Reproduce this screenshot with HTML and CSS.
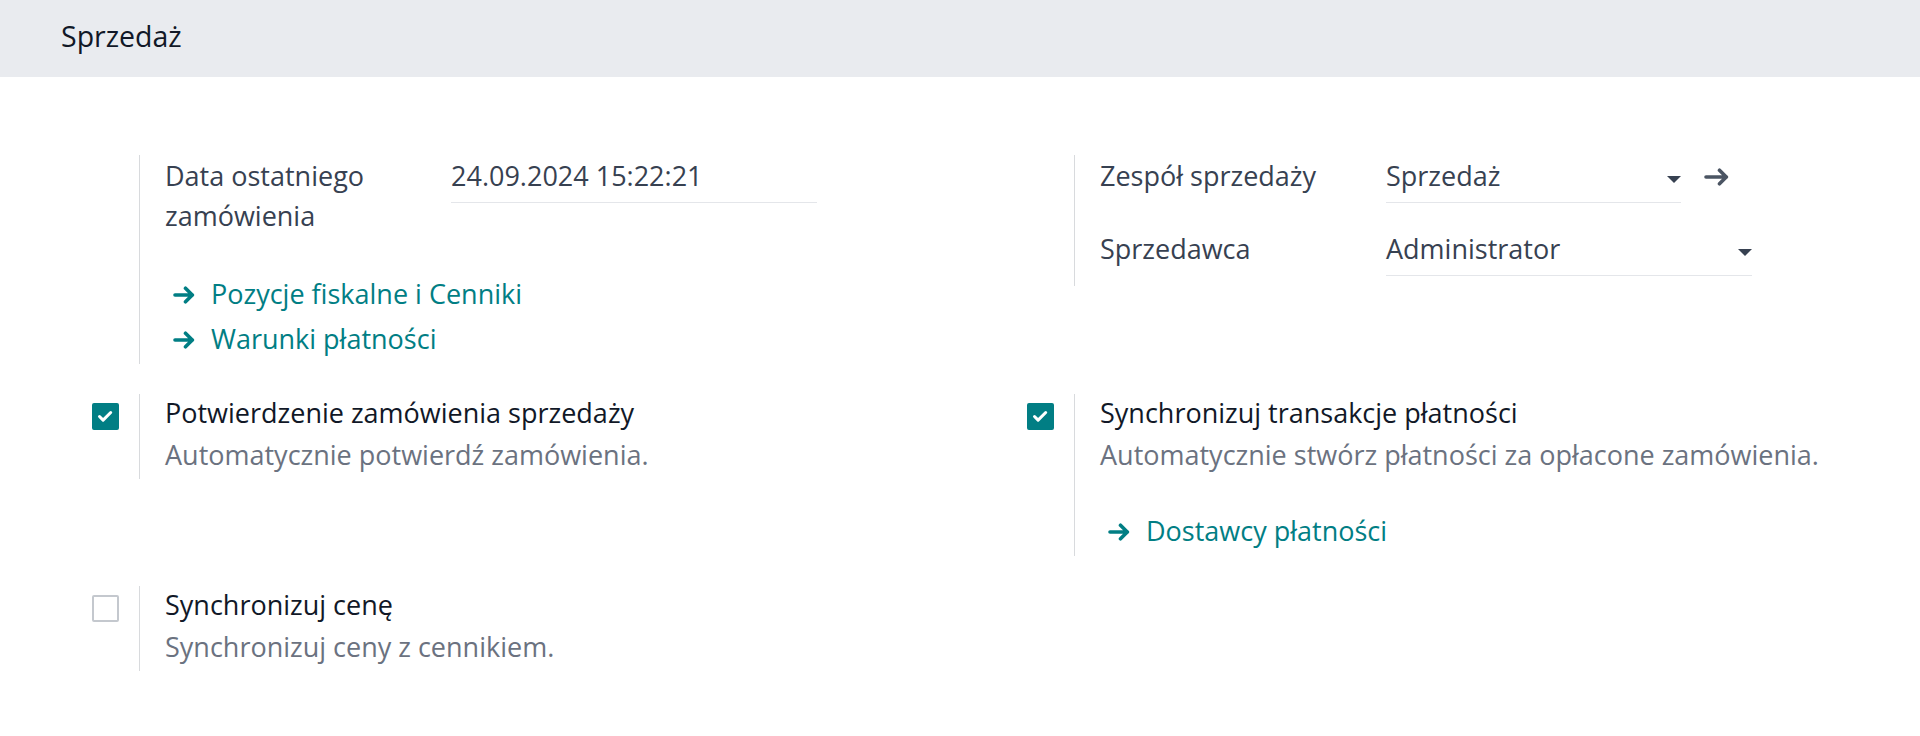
FILE: index.html
```html
<!DOCTYPE html>
<html lang="pl">
<head>
  <meta charset="UTF-8">
  <meta name="viewport" content="width=device-width, initial-scale=1.0">
  <title>Ustawienia - Sprzedaż</title>
  <link rel="stylesheet" href="styles.css">
</head>
<body>

  <h2 class="section-head">Sprzedaż</h2>

  <div class="settings">

    <!-- data ostatniego zamowienia -->
    <div class="setting">
      <div class="setting-left"></div>
      <div class="setting-right">
        <div class="field-row">
          <label class="field-label">Data ostatniego zamówienia</label>
          <div class="field-value"><span class="input">24.09.2024 15:22:21</span></div>
        </div>
        <div class="links after-fields">
          <a class="link-btn" href="#">
            <svg class="arrow" viewBox="0 0 22 18"><path d="M2 9h17.5M12.5 2.2l6.8 6.8-6.8 6.8"/></svg>
            Pozycje fiskalne i Cenniki
          </a>
          <a class="link-btn" href="#">
            <svg class="arrow" viewBox="0 0 22 18"><path d="M2 9h17.5M12.5 2.2l6.8 6.8-6.8 6.8"/></svg>
            Warunki płatności
          </a>
        </div>
      </div>
    </div>

    <!-- zespol / sprzedawca -->
    <div class="setting">
      <div class="setting-left"></div>
      <div class="setting-right fields-only">
        <div class="field-row">
          <label class="field-label">Zespół sprzedaży</label>
          <div class="field-value many2one">
            <span class="input select">Sprzedaż<i class="caret"></i></span>
            <span class="open-btn">
              <svg class="arrow big" viewBox="0 0 25 18"><path d="M2 9h20.5M15.5 2.2l6.8 6.8-6.8 6.8"/></svg>
            </span>
          </div>
        </div>
        <div class="field-row">
          <label class="field-label">Sprzedawca</label>
          <div class="field-value"><span class="input select">Administrator<i class="caret"></i></span></div>
        </div>
      </div>
    </div>

    <div class="setting">
      <div class="setting-left">
        <span class="check on"><svg viewBox="0 0 27 27"><path d="M7.5 13.5l3.6 3.6 7.6-7.6"/></svg></span>
      </div>
      <div class="setting-right">
        <div class="setting-title">Potwierdzenie zamówienia sprzedaży</div>
        <div class="setting-desc">Automatycznie potwierdź zamówienia.</div>
      </div>
    </div>

    <div class="setting">
      <div class="setting-left">
        <span class="check on"><svg viewBox="0 0 27 27"><path d="M7.5 13.5l3.6 3.6 7.6-7.6"/></svg></span>
      </div>
      <div class="setting-right">
        <div class="setting-title">Synchronizuj transakcje płatności</div>
        <div class="setting-desc">Automatycznie stwórz płatności za opłacone zamówienia.</div>
        <div class="links">
          <a class="link-btn" href="#">
            <svg class="arrow" viewBox="0 0 22 18"><path d="M2 9h17.5M12.5 2.2l6.8 6.8-6.8 6.8"/></svg>
            Dostawcy płatności
          </a>
        </div>
      </div>
    </div>

    <div class="setting">
      <div class="setting-left">
        <span class="check"></span>
      </div>
      <div class="setting-right">
        <div class="setting-title">Synchronizuj cenę</div>
        <div class="setting-desc">Synchronizuj ceny z cennikiem.</div>
      </div>
    </div>

  </div>

</body>
</html>
```

FILE: styles.css
```css
body {
  margin: 0;
  font-family: "Open Sans", "Noto Sans", sans-serif;
  font-size: 27px;
  color: #374151;
  background-color: #ffffff;
}

.section-head {
  margin: 0;
  height: 77px;
  box-sizing: border-box;
  padding: 16px 0 0 61px;
  background-color: #e9ebef;
  font-size: 28.5px;
  font-weight: 400;
  line-height: 40px;
  color: #111827;
}

.settings {
  display: grid;
  grid-template-columns: 935px 935px;
  row-gap: 30px;
  align-items: start;
  padding: 78px 0 0 92px;
}

.setting {
  display: flex;
}

.setting-left {
  width: 47px;
  flex: none;
  padding-top: 9px;
}

.setting-right {
  flex: 1;
  border-left: 1px solid #d8dadd;
  padding-left: 25px;
  padding-bottom: 3px;
}

/* fields */
.field-row {
  display: grid;
  grid-template-columns: 286px 366px;
  line-height: 40px;
}

.setting-right > .field-row:first-child {
  padding-top: 1px;
}

.field-row + .field-row {
  margin-top: 26px;
}

.setting-right.fields-only {
  padding-bottom: 10px;
}

.field-value .input {
  display: flex;
  align-items: center;
  padding-bottom: 6px;
  border-bottom: 1px solid #e4e6ea;
}

.many2one {
  display: flex;
}

.many2one .input {
  width: 295px;
  flex: none;
}

.open-btn {
  flex: 1;
  display: flex;
  justify-content: center;
  align-items: center;
  height: 40px;
  color: #4b5563;
}

.caret {
  margin-left: auto;
  margin-top: 7px;
  width: 0;
  height: 0;
  border-left: 7.5px solid transparent;
  border-right: 7.5px solid transparent;
  border-top: 7px solid #374151;
}

/* links */
.links {
  margin-top: 32px;
}

.links.after-fields {
  margin-top: 35px;
}

.link-btn {
  display: flex;
  align-items: center;
  gap: 16px;
  padding-left: 8px;
  line-height: 45px;
  color: #017e84;
  text-decoration: none;
}

.arrow {
  width: 22px;
  height: 18px;
  flex: none;
  margin-top: 3px;
  fill: none;
  stroke: currentColor;
  stroke-width: 3.6;
  stroke-linecap: round;
  stroke-linejoin: round;
}

.arrow.big {
  width: 25px;
  height: 18px;
  margin-top: 2px;
}

/* checkbox settings */
.check {
  display: block;
  width: 27px;
  height: 27px;
  box-sizing: border-box;
  border: 2px solid #c4c8ce;
  border-radius: 2px;
  background-color: #ffffff;
}

.check.on {
  border-color: #017e84;
  background-color: #017e84;
}

.check svg {
  display: block;
  width: 27px;
  height: 27px;
  margin: -2px;
  fill: none;
  stroke: #ffffff;
  stroke-width: 3;
  stroke-linecap: round;
  stroke-linejoin: round;
}

.setting-title {
  line-height: 38px;
  color: #111827;
}

.setting-desc {
  margin-top: 2px;
  line-height: 42px;
  color: #6b7280;
}
```
